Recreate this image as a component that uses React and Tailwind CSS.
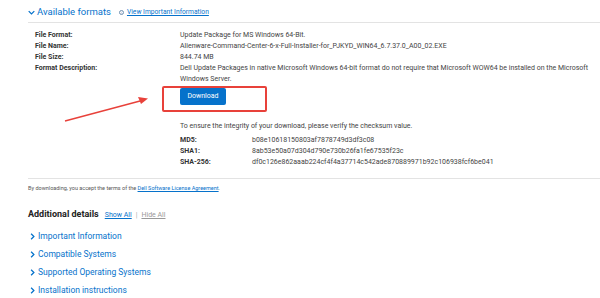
import React from "react";

const rows = [
  ["File Format:", "Update Package for MS Windows 64-Bit."],
  ["File Name:", "Alienware-Command-Center-6-x-Full-Installer-for_PJKYD_WIN64_6.7.37.0_A00_02.EXE"],
  ["File Size:", "844.74 MB"],
  [
    "Format Description:",
    "Dell Update Packages in native Microsoft Windows 64-bit format do not require that Microsoft WOW64 be installed on the Microsoft Windows Server.",
  ],
];

const sums = [
  ["MD5:", "b08e10618150803af7878749d3df3c08"],
  ["SHA1:", "8ab53e50a07d304d790e730b26fa1fe67535f23c"],
  ["SHA-256:", "df0c126e862aaab224cf4f4a37714c542ade870889971b92c106938fcf6be041"],
];

const details = [
  "Important Information",
  "Compatible Systems",
  "Supported Operating Systems",
  "Installation instructions",
];

const Chevron = ({ down }) => (
  <svg width="7" height="7" viewBox="0 0 10 10" className="shrink-0">
    {down ? (
      <polyline points="1,3 5,7 9,3" fill="none" stroke="#0672cb" strokeWidth="1.8" />
    ) : (
      <polyline points="3,1 7,5 3,9" fill="none" stroke="#0672cb" strokeWidth="1.8" />
    )}
  </svg>
);

export default function App() {
  return (
    <div className="relative w-[600px] h-[298px] overflow-hidden bg-white pl-[28px] font-['Roboto',sans-serif] text-[#444]">
      {/* header */}
      <div className="flex items-center h-[23px] pt-[3px] border-b border-[#e3e3e3]">
        <Chevron down />
        <span className="ml-[2px] text-[9.5px] text-[#0672cb]">Available formats</span>
        <span className="ml-[8px] flex items-center justify-center w-[5px] h-[5px] rounded-full border border-[#6e8fb0] text-[4px] text-[#6e8fb0]">i</span>
        <a className="ml-[3px] text-[6.7px] text-[#0672cb] underline">View Important Information</a>
      </div>

      {/* format info */}
      <div className="pl-[7px] mt-[7px]">
        <div className="grid grid-cols-[145px_1fr] text-[7px] leading-[11px]">
          {rows.map(([k, v]) => (
            <React.Fragment key={k}>
              <div className="font-bold text-[#333]">{k}</div>
              <div className="pr-[6px]">{v}</div>
            </React.Fragment>
          ))}
        </div>

        <div className="pl-[145px]">
          <button className="block mt-[3px] w-[46px] h-[17px] rounded-[2px] bg-[#0672cb] text-white text-[7px] leading-[17px]">
            Download
          </button>
          <div className="mt-[16px] text-[7px] leading-[11px]">
            To ensure the integrity of your download, please verify the checksum value.
          </div>
          <div className="mt-[3px] grid grid-cols-[72px_1fr] text-[7px] leading-[11px]">
            {sums.map(([k, v]) => (
              <React.Fragment key={k}>
                <div className="font-bold text-[#333]">{k}</div>
                <div>{v}</div>
              </React.Fragment>
            ))}
          </div>
        </div>
      </div>

      <div className="mt-[10px] border-t border-[#e3e3e3]" />

      <div className="mt-[5px] text-[5.5px] leading-[8px] text-[#555]">
        By downloading, you accept the terms of the{" "}
        <a className="text-[#0672cb] underline">Dell Software License Agreement</a>.
      </div>

      {/* additional details */}
      <div className="mt-[17px] flex items-center h-[12px]">
        <span className="text-[9px] font-bold text-[#222]">Additional details</span>
        <a className="ml-[6px] text-[7px] text-[#0672cb] underline">Show All</a>
        <span className="mx-[4px] text-[7px] text-[#aaa]">|</span>
        <a className="text-[7px] text-[#999] underline">Hide All</a>
      </div>

      <div className="mt-[6px]">
        {details.map((d) => (
          <div key={d} className="flex items-center h-[18px] pl-[1px]">
            <Chevron />
            <span className="ml-[2px] text-[8.5px] text-[#0672cb]">{d}</span>
          </div>
        ))}
      </div>

      {/* annotation overlay */}
      <div className="absolute left-[162px] top-[86px] w-[105px] h-[26px] border-2 border-[#e8413a] rounded-[2px] pointer-events-none" />
      <svg className="absolute left-0 top-0 pointer-events-none" width="600" height="298">
        <line x1="65" y1="121" x2="140" y2="101" stroke="#e8413a" strokeWidth="1.6" />
        <polygon points="148,98.5 138,97 141,104" fill="#e8413a" />
      </svg>
    </div>
  );
}
